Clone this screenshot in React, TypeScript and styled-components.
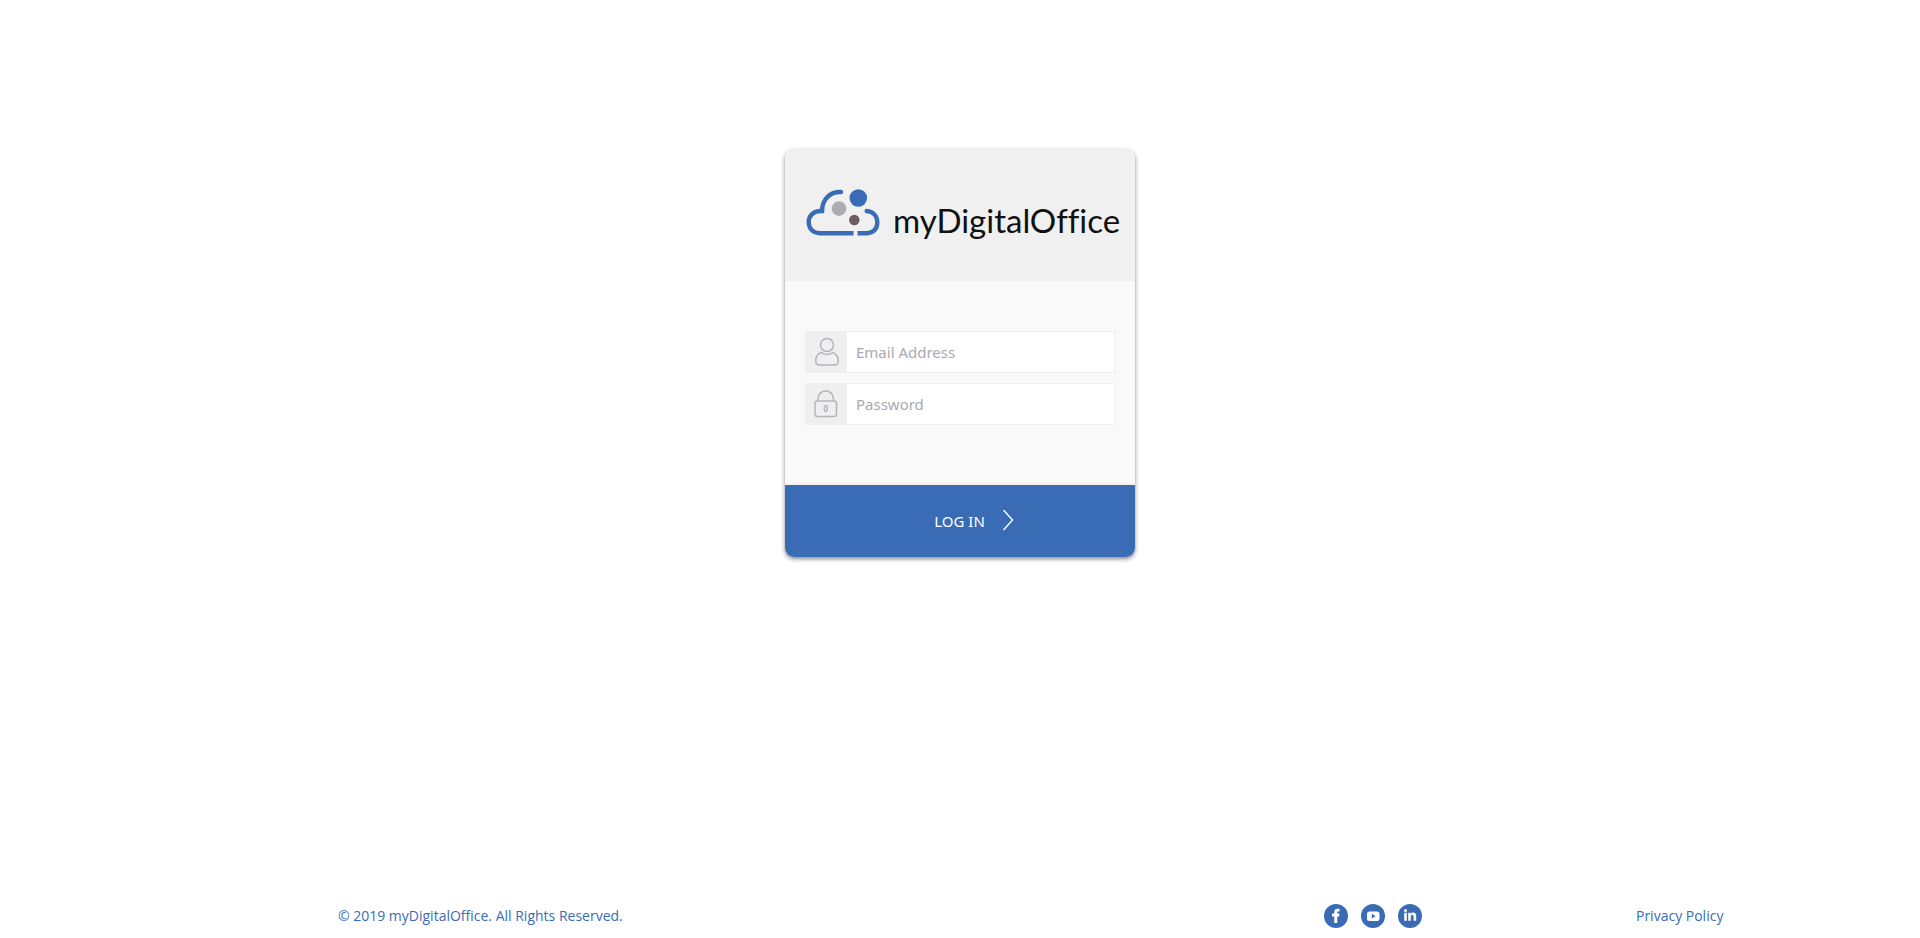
import React from "react";
import styled, { createGlobalStyle } from "styled-components";

const blue = "#3a6cb5";

const GlobalStyle = createGlobalStyle`
  *, *::before, *::after { box-sizing: border-box; }
  body {
    margin: 0;
    background: #fff;
    font-family: "Open Sans", "Noto Sans", sans-serif;
  }
`;

const Page = styled.div`
  min-height: 100vh;
  display: flex;
  flex-direction: column;
`;

const Main = styled.main`
  flex: 1;
  padding: 149px 16px 48px;
`;

const Card = styled.form`
  width: 100%;
  max-width: 350px;
  margin: 0 auto;
  border-radius: 9px;
  overflow: hidden;
  background: #f9f9f9;
  box-shadow: 0 2px 4px rgba(60, 55, 70, 0.6);
`;

const CardHeader = styled.header`
  display: flex;
  height: 132px;
  padding: 38px 0 0 20px;
  background: #f0f0f0;
`;

const LogoMark = styled.svg`
  flex: none;
  width: 76px;
  height: 52px;
`;

const LogoText = styled.h1`
  margin: 13px 0 0 12px;
  font: 400 33px/40px Lato, sans-serif;
  font-variant-ligatures: none;
  color: #111;
`;

const Fields = styled.div`
  display: flex;
  flex-direction: column;
  gap: 10px;
  padding: 50px 20px 58px;
  border-bottom: 2px solid #f0f0f0;
`;

const Field = styled.label`
  display: flex;
  height: 42px;
  border: 1px solid #eeeeee;
  background: #fff;
`;

const FieldIcon = styled.span`
  display: flex;
  align-items: center;
  justify-content: center;
  flex: none;
  width: 41px;
  background: #efefef;
`;

const Glyph = styled.svg`
  width: 28px;
  height: 30px;
  fill: none;
  stroke: #b5b5bc;
  stroke-width: 1.5;
`;

const TextInput = styled.input`
  flex: 1;
  min-width: 0;
  padding: 0 9px;
  border: 0;
  outline: 0;
  background: #fff;
  font: 400 15px/24px "Noto Sans", sans-serif;
  color: #444;
  &::placeholder { color: #a9a9af; opacity: 1; }
`;

const LoginButton = styled.button`
  display: flex;
  align-items: center;
  justify-content: center;
  gap: 17px;
  width: 100%;
  height: 72px;
  padding: 0 0 0 28px;
  border: 0;
  background: ${blue};
  color: #fff;
  font: 400 15px/24px "Noto Sans", sans-serif;
  cursor: pointer;
`;

const Chevron = styled.svg`
  width: 12px;
  height: 22px;
  fill: none;
  stroke: #fff;
  stroke-width: 1.4;
`;

const Footer = styled.footer`
  display: grid;
  grid-template-columns: 986fr 312fr 284fr;
  align-items: center;
  padding: 0 0 10px 17.6%;
  font-size: 14px;
  line-height: 24px;
  color: ${blue};
`;

const Copyright = styled.p`
  margin: 0;
`;

const Social = styled.nav`
  display: flex;
  gap: 13px;
`;

const SocialLink = styled.a`
  display: flex;
  svg { width: 24px; height: 24px; }
`;

const FooterLink = styled.a`
  color: inherit;
  text-decoration: none;
`;

export default function App() {
  return (
    <Page>
      <GlobalStyle />
      <Main>
        <Card onSubmit={(e: React.FormEvent) => e.preventDefault()}>
          <CardHeader>
            <LogoMark viewBox="10 7 76 52" aria-hidden="true">
              <g fill="none" stroke={blue} strokeWidth="4.4">
                <path d="M46 12C35.500 11.500 27 19 27 31" />
                <path d="M29.200 31H26C18.500 31 13.700 35.500 13.700 42C13.700 48.500 18 53.200 25 53.200H58.500" />
                <path d="M62.500 53.200H72C78.500 53.200 82.300 48.500 82.300 42.500C82.300 36 78 31.500 71.700 31" />
              </g>
              <circle cx="46" cy="12" r="2.200" fill={blue} />
              <circle cx="71.700" cy="31" r="2.200" fill={blue} />
              <circle cx="63.300" cy="18" r="8.800" fill={blue} />
              <circle cx="44" cy="28.600" r="7.300" fill="#aeabb1" />
              <circle cx="59.300" cy="40" r="5.200" fill="#6b5960" />
              <g fill="#a79aa0">
                <circle cx="57.500" cy="38.500" r="0.600" />
                <circle cx="61" cy="38.500" r="0.600" />
                <circle cx="57.500" cy="42" r="0.600" />
                <circle cx="61" cy="42" r="0.600" />
              </g>
            </LogoMark>
            <LogoText>myDigitalOffice</LogoText>
          </CardHeader>
          <Fields>
            <Field>
              <FieldIcon>
                <Glyph viewBox="0 0 28 30" aria-hidden="true">
                  <circle cx="14" cy="8" r="6.500" />
                  <path d="M8.500 15.500C5 16.500 2.700 19.500 2.700 24C2.700 27 4 28 6.500 28H21.500C24 28 25.300 27 25.300 24C25.300 19.500 23 16.500 19.500 15.500C16.500 18.300 11.500 18.300 8.500 15.500Z" />
                </Glyph>
              </FieldIcon>
              <TextInput type="email" placeholder="Email Address" aria-label="Email Address" />
            </Field>
            <Field>
              <FieldIcon>
                <Glyph viewBox="1 0 28 30" aria-hidden="true">
                  <rect x="3" y="12" width="21.500" height="15.500" rx="2.500" />
                  <path d="M6 12V10C6 5 9.500 2 13.800 2C18 2 21.500 5 21.500 10V12" />
                  <ellipse cx="13.800" cy="19.500" rx="1.500" ry="3" />
                </Glyph>
              </FieldIcon>
              <TextInput type="password" placeholder="Password" aria-label="Password" />
            </Field>
          </Fields>
          <LoginButton type="submit">
            LOG IN
            <Chevron viewBox="0 0 12 22" aria-hidden="true">
              <path d="M1.500 0L10.500 10L1.500 20" />
            </Chevron>
          </LoginButton>
        </Card>
      </Main>
      <Footer>
        <Copyright>© 2019 myDigitalOffice. All Rights Reserved.</Copyright>
        <Social aria-label="Social media">
          <SocialLink href="#facebook" aria-label="Facebook">
            <svg viewBox="0 0 24 24">
              <circle cx="12" cy="12" r="12" fill={blue} />
              <path fill="#fff" d="M10.300 19V12.500H8V9.600H10.300V8.200C10.300 5.800 11.500 4.700 13.500 4.700H15.500V7.500H14.400C13.500 7.500 13.300 7.900 13.300 8.700V9.600H15.500L15.200 12.500H13.300V19Z" />
            </svg>
          </SocialLink>
          <SocialLink href="#youtube" aria-label="YouTube">
            <svg viewBox="0 0 24 24">
              <circle cx="12" cy="12" r="12" fill={blue} />
              <rect x="6" y="7.500" width="12.500" height="9.500" rx="2.500" fill="#fff" />
              <path fill={blue} d="M10.800 9.800L14.600 12.200L10.800 14.600Z" />
            </svg>
          </SocialLink>
          <SocialLink href="#linkedin" aria-label="LinkedIn">
            <svg viewBox="0 0 24 24">
              <circle cx="12" cy="12" r="12" fill={blue} />
              <circle cx="7.500" cy="6.500" r="1.500" fill="#fff" />
              <path fill="#fff" d="M6.200 8.800H8.800V16.700H6.200ZM10.200 8.800H12.700V9.900C13.300 9 14.100 8.600 15.100 8.600C17.300 8.600 18.200 10 18.200 12.300V16.700H15.600V12.700C15.600 11.500 15.200 10.900 14.300 10.900C13.300 10.900 12.800 11.600 12.800 12.800V16.700H10.200Z" />
            </svg>
          </SocialLink>
        </Social>
        <FooterLink href="#privacy">Privacy Policy</FooterLink>
      </Footer>
    </Page>
  );
}
